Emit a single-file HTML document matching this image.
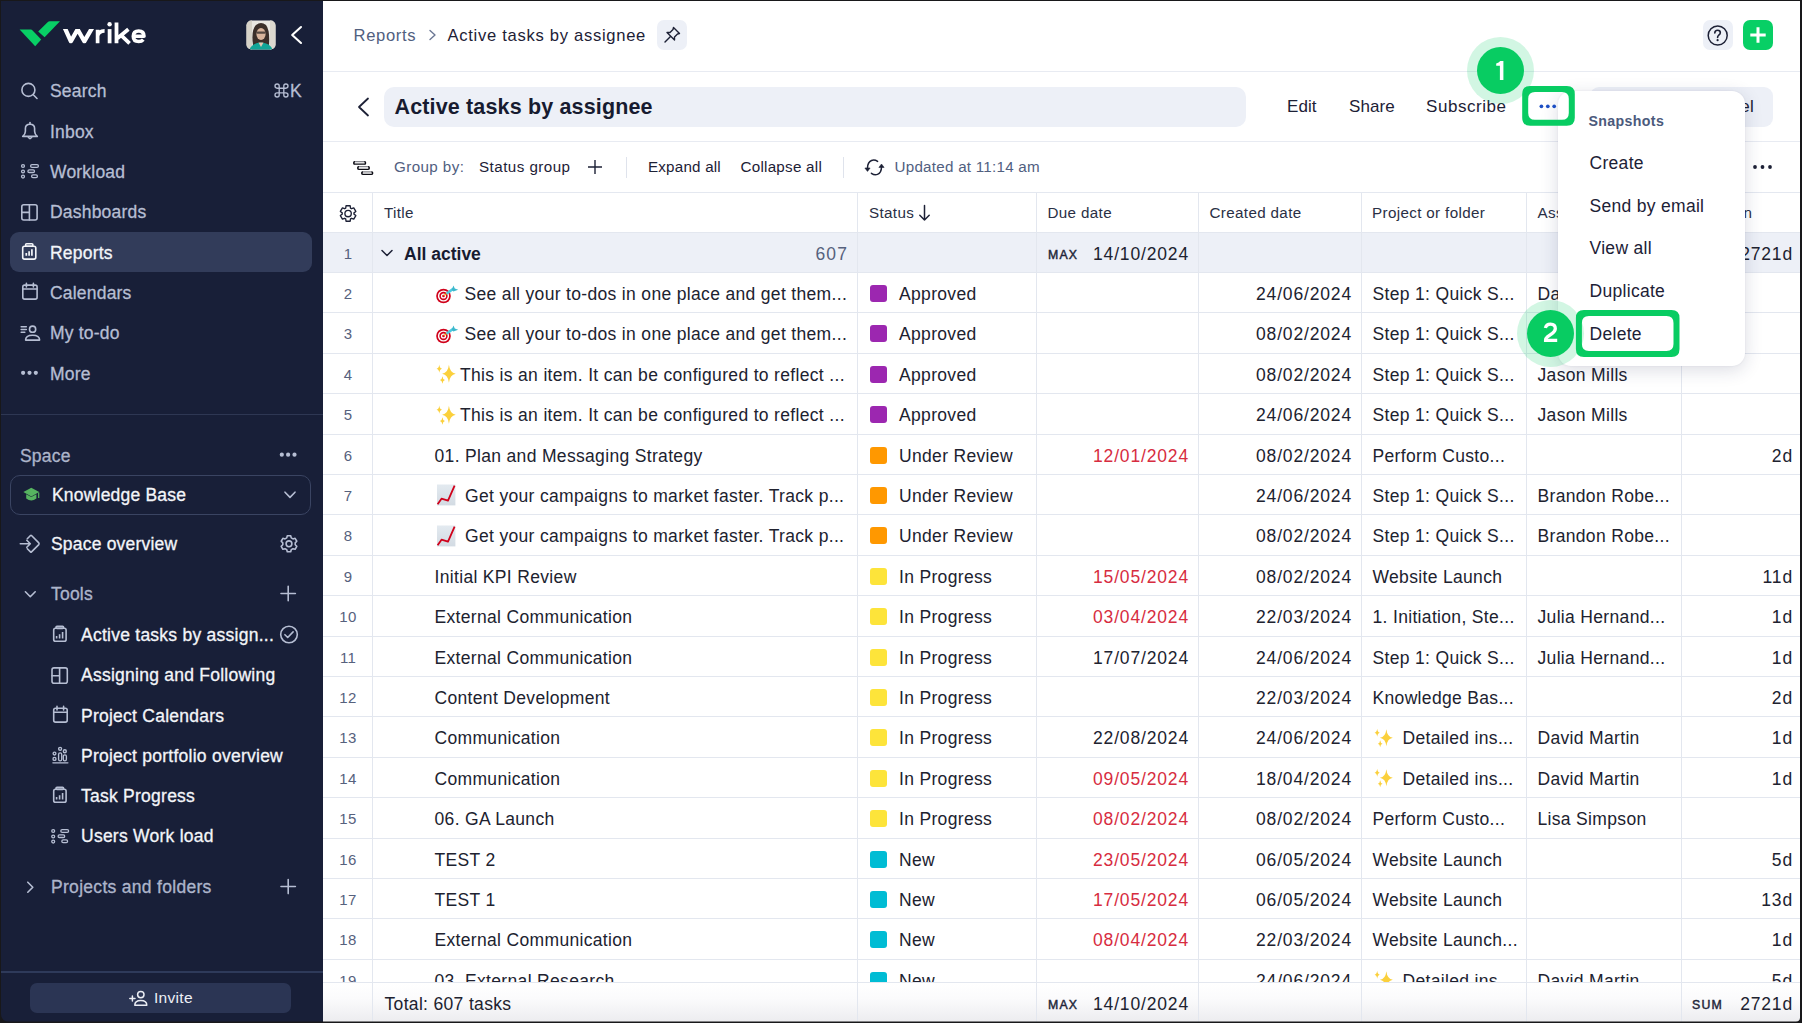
<!DOCTYPE html><html><head><meta charset="utf-8"><style>
*{box-sizing:border-box;margin:0;padding:0}
html,body{width:1802px;height:1023px;overflow:hidden;background:#1b1b1d;font-family:"Liberation Sans", sans-serif}
#frame{position:absolute;left:0;top:0;width:1802px;height:1023px;background:#fff;overflow:hidden}
.abs{position:absolute}
.t{position:absolute;white-space:nowrap;line-height:20px;height:20px}
#sb{position:absolute;left:0;top:0;width:323px;height:1023px;background:#181f38}
.nav{font-size:17.5px;letter-spacing:0.2px;color:#b6bed3;-webkit-text-stroke:0.3px #b6bed3}
.wh{color:#f3f5f9;-webkit-text-stroke:0.3px #f3f5f9}
.ic{position:absolute;overflow:visible}
#main{position:absolute;left:323px;top:0;width:1477px;height:1023px;background:#fff}
.hl{position:absolute;left:0;width:1477px;height:1px;background:#e4e8f0}
.row{position:absolute;left:0;width:1477px;height:40.39px;border-bottom:1px solid #e3e7ef}
.c{position:absolute;top:0;height:100%;border-right:1px solid #e3e7ef}
.tx{position:absolute;white-space:nowrap;font-size:17.5px;letter-spacing:0.33px;color:#20222f;line-height:20px;top:11px}
.dt{letter-spacing:0.84px}
.red{color:#d72c40}
.num{position:absolute;left:0;width:50px;text-align:center;font-size:15px;letter-spacing:0.3px;color:#56617d;line-height:20px;top:11px}
.sq{position:absolute;left:12px;top:12px;width:17px;height:17px;border-radius:3px}
</style></head><body><div id="frame">
<div id="sb">
<div class="abs" style="left:10px;top:232px;width:302px;height:40px;border-radius:9px;background:#323c5a"></div>
<div class="abs" style="left:30px;top:983px;width:261px;height:30px;border-radius:7px;background:#2b3554"></div>
<svg class="ic" style="left:0;top:0" width="323" height="1023" viewBox="0 0 323 1023"><path d="M19.6 29.6 L30.8 29.6 Q31.8 29.6 32.6 30.4 L41.2 39.6 L35.2 46.3 Z" fill="#08cf65"/><path d="M38.2 31.4 L47.6 22.3 Q48.6 21.3 49.8 21.3 L60 21.3 L44.6 37.2 Z" fill="#08cf65"/><g fill="none" stroke="#fff" stroke-width="3.8" stroke-linejoin="round"><clipPath id="wc"><rect x="60" y="29.1" width="40" height="14.3"/></clipPath><path clip-path="url(#wc)" d="M64.6 27.5 L70.9 41.3 L77.6 29.5 L84.3 41.3 L92.4 27.5" stroke-width="4.3" stroke-linejoin="round"/><path d="M97.6 43.3 V29.8 M97.6 36 Q98.6 30.9 104.6 30.9" stroke-width="3.7"/><path d="M109.6 29.1 V43.3" stroke-width="3.8"/><path d="M116.5 22.4 V43.3 M117.5 38.2 L128.4 29.3 M121.2 35.4 L129.6 43.3" stroke-width="3.8"/><path d="M133.4 36.3 H144 Q144 31 138.7 31 Q133.3 31 133.3 36.3 Q133.3 41.5 138.7 41.5 Q141.6 41.5 143.3 39.6" stroke-width="3.6"/></g><circle cx="109.6" cy="24.3" r="2.2" fill="#fff"/><defs><clipPath id="av"><rect x="246.5" y="20.5" width="29" height="29" rx="5"/></clipPath></defs><g clip-path="url(#av)"><rect x="246" y="20" width="30" height="30" fill="#e9e7e2"/><rect x="246" y="20" width="6" height="30" fill="#d6d2c8"/><rect x="270" y="20" width="6" height="30" fill="#dcd8cf"/><path d="M253 45 Q251 30 256 25 Q261 21 266 25 Q270 30 269 45 Z" fill="#3b2f2a"/><ellipse cx="261" cy="34" rx="4.6" ry="6" fill="#d9b49c"/><rect x="256.5" y="31.5" width="9" height="2.2" rx="1" fill="#2b2624" opacity="0.75"/><path d="M249 51 Q251 43 261 42.5 Q271 43 273 51 Z" fill="#12a597"/><path d="M258.5 42.5 L261 47 L263.5 42.5 Z" fill="#e6c6b0"/></g><path d="M301 27 L292.2 35 L301 43" stroke="#fff" stroke-width="2.1" fill="none" stroke-linecap="round" stroke-linejoin="round"/><circle cx="23.1" cy="372.8" r="2.1" fill="#b6bed3"/><circle cx="29.5" cy="372.8" r="2.1" fill="#b6bed3"/><circle cx="35.8" cy="372.8" r="2.1" fill="#b6bed3"/><circle cx="281.8" cy="454.7" r="2.1" fill="#b6bed3"/><circle cx="288.1" cy="454.7" r="2.1" fill="#b6bed3"/><circle cx="294.5" cy="454.7" r="2.1" fill="#b6bed3"/><path d="M23.4 492 L31.3 487.8 L39.2 492 L31.3 496.4 Z" fill="#56b460"/><path d="M26.2 494.2 L26.2 498.6 Q31.3 502.6 36.4 498.6 L36.4 494.2 L31.3 497.1 Z" fill="#56b460"/><rect x="38.1" y="492.5" width="1.2" height="5.5" fill="#56b460"/><g fill="none" stroke="#e9ecf3" stroke-width="1.5" stroke-linecap="round" stroke-linejoin="round"><path d="M129.8 998.5 H135 M132.4 995.9 V1001.1"/><circle cx="140.8" cy="994.6" r="3.2"/><path d="M134.8 1005.3 Q134.8 1000.5 140.8 1000.5 Q146.8 1000.5 146.8 1005.3 Z"/></g><g fill="none" stroke="#b6bed3" stroke-width="1.6" stroke-linecap="round" stroke-linejoin="round"><circle cx="28.4" cy="89.9" r="6.5"/><path d="M33.3 94.8 L37 98.5"/><path d="M22.7 136.4 Q25.4 134.3 25.4 131.3 V128.6 Q25.4 124.3 30 124.3 Q34.6 124.3 34.6 128.6 V131.3 Q34.6 134.3 37.3 136.4 Z"/><path d="M30 122.5 V124.3"/><path d="M28.3 137.2 Q30 140 31.7 137.2"/><g stroke-width="1.3"><circle cx="23" cy="166" r="1.45"/><circle cx="23" cy="171.5" r="1.45"/><circle cx="23" cy="176.6" r="1.45"/><rect x="30.6" y="164.7" width="7.8" height="2.7" rx="1.35"/><rect x="27.9" y="169.8" width="6.6" height="2.7" rx="1.35"/><rect x="31.6" y="174.9" width="5.8" height="2.7" rx="1.35"/></g><rect x="21.8" y="204.7" width="15.3" height="15.3" rx="2"/><path d="M29.4 204.7 V220 M21.8 212.4 H29.4"/><g stroke="#f3f5f9"><rect x="22.7" y="246.2" width="13.1" height="12.9" rx="1.8"/><rect x="25.6" y="243.8" width="7.3" height="2.4" rx="1"/><path stroke-width="1.7" stroke-linecap="butt" d="M26.3 253 V255.8 M29.1 251.3 V255.8 M31.9 249.3 V255.8"/></g><rect x="22.8" y="285.1" width="14.3" height="14" rx="1.8"/><path d="M22.8 289 H37.1 M26.4 283.3 V287 M33.4 283.3 V287"/><path d="M21.2 326.7 H26.3 M21.2 329.5 H26.3 M21.2 332.2 H24.8"/><circle cx="32.6" cy="329.2" r="3.1"/><path d="M25.6 340.1 Q25.6 335.2 32.6 335.2 Q39.6 335.2 39.6 340.1 Z"/><path d="M285 492.2 L290 497.4 L295 492.2"/><path d="M20.3 543.8 H30.3 M26.8 540.3 L30.3 543.8 L26.8 547.3"/><path d="M27.3 538.7 L30.5 535.5 Q31 535 31.5 535.5 L38.8 542.9 Q39.4 543.8 38.8 544.6 L31.5 551.9 Q31 552.4 30.5 551.9 L27.3 548.7"/><path d="M286.74 537.92 L287.30 535.78 L290.70 535.78 L291.26 537.92 L292.96 538.90 L295.09 538.31 L296.80 541.27 L295.22 542.81 L295.22 544.79 L296.80 546.33 L295.09 549.29 L292.96 548.70 L291.26 549.68 L290.70 551.82 L287.30 551.82 L286.74 549.68 L285.04 548.70 L282.91 549.29 L281.20 546.33 L282.78 544.79 L282.78 542.81 L281.20 541.27 L282.91 538.31 L285.04 538.90 Z"/><circle cx="289" cy="543.8" r="2.9"/><path d="M25.4 591.8 L30.3 596.7 L35.2 591.8"/><path d="M288.2 586.3 V600.7 M281 593.5 H295.4"/><rect x="53.7" y="628.3" width="12.4" height="13" rx="1.8"/><rect x="56" y="626.2" width="7.6" height="2.2" rx="1"/><path stroke-width="1.6" stroke-linecap="butt" d="M56.6 636 V638.5 M59.6 634.3 V638.5 M62.6 632 V638.5"/><rect x="53.7" y="789.3" width="12.4" height="13" rx="1.8"/><rect x="56" y="787.2" width="7.6" height="2.2" rx="1"/><path stroke-width="1.6" stroke-linecap="butt" d="M56.6 797 V799.5 M59.6 795.3 V799.5 M62.6 793 V799.5"/><rect x="52" y="667.9" width="15.3" height="15.3" rx="2"/><path d="M59.6 667.9 V683.2 M52 675.8 H59.6"/><rect x="53.7" y="708.2" width="13.5" height="13.9" rx="1.8"/><path d="M53.7 712.3 H67.2 M57 706.4 V710 M63.6 706.4 V710"/><g stroke-width="1.35"><circle cx="54.5" cy="753.6" r="1.4"/><circle cx="54.5" cy="758.9" r="1.5"/><rect x="58.6" y="752.8" width="3.1" height="8.1" rx="1.55"/><circle cx="60.1" cy="748.8" r="1.5"/><rect x="63.3" y="754.8" width="3.1" height="6.1" rx="1.55"/><circle cx="64.8" cy="751.2" r="1.5"/><path d="M52.9 762.8 H67.9"/></g><g stroke-width="1.3"><circle cx="53.2" cy="831" r="1.45"/><circle cx="53.2" cy="836.5" r="1.45"/><circle cx="53.2" cy="841.6" r="1.45"/><rect x="60.8" y="829.7" width="7.8" height="2.7" rx="1.35"/><rect x="58.099999999999994" y="834.8" width="6.6" height="2.7" rx="1.35"/><rect x="61.8" y="839.9" width="5.8" height="2.7" rx="1.35"/></g><circle cx="289" cy="634.5" r="8.3"/><path d="M284.9 634.7 L287.7 637.5 L293.1 631.9"/><path d="M27.8 882.2 L32.8 887.2 L27.8 892.2"/><path d="M288.2 879.5 V893.6 M281 886.5 H295.4"/></g></svg>
<div class="t nav" style="left:50px;top:81.0px">Search</div>
<div class="t nav" style="left:50px;top:121.5px">Inbox</div>
<div class="t nav" style="left:50px;top:161.8px">Workload</div>
<div class="t nav" style="left:50px;top:202.1px">Dashboards</div>
<div class="t nav wh" style="left:50px;top:242.5px">Reports</div>
<div class="t nav" style="left:50px;top:282.8px">Calendars</div>
<div class="t nav" style="left:50px;top:323.2px">My to-do</div>
<div class="t nav" style="left:50px;top:363.5px">More</div>
<div class="t nav" style="left:290px;top:80.5px;font-size:17.5px;letter-spacing:0">K</div>
<svg class="ic" style="left:270px;top:80px" width="22" height="22" viewBox="270 80 22 22"><path d="M279.2 88.2 H283.8 V92.8 H279.2 Z M279.2 88.2 V86.1 A2.1 2.1 0 1 0 277.1 88.2 Z M283.8 88.2 V86.1 A2.1 2.1 0 1 1 285.9 88.2 Z M279.2 92.8 V94.9 A2.1 2.1 0 1 1 277.1 92.8 Z M283.8 92.8 V94.9 A2.1 2.1 0 1 0 285.9 92.8 Z" fill="none" stroke="#b6bed3" stroke-width="1.35" stroke-linejoin="round"/></svg>
<div class="abs" style="left:0;top:414px;width:323px;height:1.2px;background:#2e3753"></div>
<div class="t nav" style="left:20px;top:446px;color:#a9b1c7">Space</div>
<div class="abs" style="left:10px;top:474.5px;width:301px;height:40px;border-radius:10px;border:1.2px solid #3a4462"></div>
<div class="t nav wh" style="left:52px;top:485px">Knowledge Base</div>
<div class="t nav wh" style="left:51px;top:533.5px">Space overview</div>
<div class="t nav" style="left:51px;top:584px;color:#aab2c8">Tools</div>
<div class="t nav wh" style="left:81px;top:625.2px;letter-spacing:0.25px">Active tasks by assign...</div>
<div class="t nav wh" style="left:81px;top:665.3px;letter-spacing:0.25px">Assigning and Following</div>
<div class="t nav wh" style="left:81px;top:706px;letter-spacing:0.25px">Project Calendars</div>
<div class="t nav wh" style="left:81px;top:746px;letter-spacing:0.25px">Project portfolio overview</div>
<div class="t nav wh" style="left:81px;top:785.8px;letter-spacing:0.25px">Task Progress</div>
<div class="t nav wh" style="left:81px;top:826.1px;letter-spacing:0.25px">Users Work load</div>
<div class="t nav" style="left:51px;top:877.3px;color:#aab2c8;letter-spacing:0.3px">Projects and folders</div>
<div class="abs" style="left:0;top:971px;width:323px;height:1.5px;background:#2e3a5a"></div>
<div class="t" style="left:154px;top:988px;font-size:15.5px;letter-spacing:0.3px;color:#eef0f6">Invite</div>
</div>
<div id="main">
<div class="t" style="left:30.5px;top:26px;font-size:16.6px;letter-spacing:0.65px;color:#51607f">Reports</div>
<svg class="ic" style="left:104px;top:27px" width="12" height="16" viewBox="0 0 12 16"><path d="M3 3.5 L8 8 L3 12.5" stroke="#6b7794" stroke-width="1.4" fill="none" stroke-linecap="round" stroke-linejoin="round"/></svg>
<div class="t" style="left:124.5px;top:26px;font-size:16.6px;letter-spacing:0.7px;color:#1d2136">Active tasks by assignee</div>
<div class="abs" style="left:334px;top:20px;width:30px;height:30px;border-radius:7px;background:#edf0f7"></div>
<svg class="ic" style="left:339px;top:25px" width="20" height="20" viewBox="0 0 20 20" fill="none" stroke="#1d2136" stroke-width="1.4" stroke-linejoin="round" stroke-linecap="round"><path d="M11.5 2.5 L17.5 8.5 L15.5 9 L12.5 12 L12.5 15 L5 7.5 L8 7.5 L11 4.5 Z"/><path d="M8.5 11.5 L3 17"/></svg>
<div class="abs" style="left:1380px;top:20px;width:30px;height:30px;border-radius:7px;background:#edf0f7"></div>
<svg class="ic" style="left:1384px;top:24.5px" width="21" height="21" viewBox="0 0 21 21"><circle cx="10.7" cy="10.5" r="9.5" stroke="#1d2136" stroke-width="1.5" fill="none"/><path d="M7.8 8 Q7.8 5.3 10.6 5.3 Q13.3 5.3 13.3 7.8 Q13.3 9.3 11.6 10.3 Q10.6 11 10.6 12.5" stroke="#1d2136" stroke-width="1.6" fill="none" stroke-linecap="round"/><circle cx="10.6" cy="15.2" r="1.1" fill="#1d2136"/></svg>
<div class="abs" style="left:1420px;top:20px;width:30px;height:30px;border-radius:7px;background:#08cf65"></div>
<svg class="ic" style="left:1420px;top:20px" width="30" height="30" viewBox="0 0 30 30"><path d="M15 7.3 L15 22.7 M7.3 15 L22.7 15" stroke="#fff" stroke-width="3"/></svg>
<div class="hl" style="top:70.5px;height:1.5px;background:#e8ebf2"></div>
<svg class="ic" style="left:29px;top:96px" width="22" height="22" viewBox="0 0 22 22"><path d="M16 2.5 L7 11 L16 19.5" stroke="#1d2136" stroke-width="1.8" fill="none" stroke-linecap="round" stroke-linejoin="round"/></svg>
<div class="abs" style="left:60.5px;top:86.5px;width:862.5px;height:40px;border-radius:10px;background:#edf0f7"></div>
<div class="t" style="left:71.5px;top:91.5px;height:30px;line-height:30px;font-size:21.5px;font-weight:bold;letter-spacing:0.15px;color:#171b30">Active tasks by assignee</div>
<div class="t" style="left:964px;top:96.5px;font-size:17px;letter-spacing:0.05px;color:#1d2136">Edit</div>
<div class="t" style="left:1026px;top:96.5px;font-size:17px;letter-spacing:0.1px;color:#1d2136">Share</div>
<div class="t" style="left:1103px;top:96.5px;font-size:17px;letter-spacing:0.55px;color:#1d2136">Subscribe</div>
<div class="abs" style="left:1266.5px;top:86.5px;width:183px;height:40px;border-radius:9px;background:#edf0f7"></div>
<div class="t" style="left:1338px;top:96.5px;font-size:17px;letter-spacing:0.3px;color:#1d2136">Close panel</div>
<div class="hl" style="top:140.5px;height:1.5px;background:#e8ebf2"></div>
<svg class="ic" style="left:23px;top:152px" width="36" height="30" viewBox="346 152 36 30" fill="none" stroke-width="1.3"><g stroke="#85858c"><path d="M355 164.2 A1.3 1.3 0 0 1 355 161.6 H364.3 A1.3 1.3 0 0 1 364.3 164.2"/><path d="M359 169.3 A1.3 1.3 0 0 1 359 166.7 H368 A1.3 1.3 0 0 1 368 169.3"/><path d="M363 174.4 A1.3 1.3 0 0 1 363 171.8 H371.4 A1.3 1.3 0 0 1 371.4 174.4"/></g><g stroke="#0c0c14"><path d="M355 161.6 A1.3 1.3 0 0 0 355 164.2 H364.3 A1.3 1.3 0 0 0 364.3 161.6"/><path d="M359 166.7 A1.3 1.3 0 0 0 359 169.3 H368 A1.3 1.3 0 0 0 368 166.7"/><path d="M363 171.8 A1.3 1.3 0 0 0 363 174.4 H371.4 A1.3 1.3 0 0 0 371.4 171.8"/></g></svg>
<div class="t" style="left:71px;top:157px;font-size:15.2px;letter-spacing:0.4px;color:#51607f">Group by:</div>
<div class="t" style="left:156px;top:157px;font-size:15.2px;letter-spacing:0.45px;color:#1d2136">Status group</div>
<svg class="ic" style="left:263px;top:158px" width="18" height="18" viewBox="0 0 18 18"><path d="M9 2 L9 16 M2 9 L16 9" stroke="#1d2136" stroke-width="1.4"/></svg>
<div class="abs" style="left:303px;top:157px;width:1px;height:21px;background:#dfe3ec"></div>
<div class="t" style="left:325px;top:157px;font-size:15.2px;letter-spacing:0.2px;color:#1d2136">Expand all</div>
<div class="t" style="left:417.5px;top:157px;font-size:15.2px;letter-spacing:0.25px;color:#1d2136">Collapse all</div>
<div class="abs" style="left:520px;top:157px;width:1px;height:21px;background:#dfe3ec"></div>
<svg class="ic" style="left:535px;top:152px" width="34" height="30" viewBox="858 152 34 30"><g fill="none" stroke="#1d2136" stroke-width="1.5" stroke-linecap="round"><path d="M877.6 161.4 Q874.5 159.3 871.5 160.5 Q867.6 162.1 867.5 168"/><path d="M871.4 173.3 Q874.5 175.5 877.5 174.4 Q881.4 172.9 881.5 167"/></g><path d="M864.9 168 L870.1 168 L867.5 171.4 Z M878.9 167.4 L884.1 167.4 L881.5 164 Z" fill="#1d2136" stroke="#1d2136" stroke-width="0.6" stroke-linejoin="round"/></svg>
<div class="t" style="left:571.5px;top:157px;font-size:15.2px;letter-spacing:0.25px;color:#51607f">Updated at 11:14 am</div>
<svg class="ic" style="left:1429px;top:160px" width="22" height="14" viewBox="0 0 22 14"><circle cx="3" cy="7" r="1.9" fill="#1d2136"/><circle cx="10.5" cy="7" r="1.9" fill="#1d2136"/><circle cx="18" cy="7" r="1.9" fill="#1d2136"/></svg>
<div class="hl" style="top:192px;height:1.2px;background:#e4e8f0"></div>
<div class="row" style="top:192.5px;height:40px"><div class="c" style="left:0px;width:50px"></div><div class="c" style="left:50px;width:485px"></div><div class="c" style="left:535px;width:179px"></div><div class="c" style="left:714px;width:162px"></div><div class="c" style="left:876px;width:163px"></div><div class="c" style="left:1039px;width:165px"></div><div class="c" style="left:1204px;width:155px"></div><div class="c" style="left:1359px;width:118px;border-right:none"></div>
<svg class="ic" style="left:0;top:0" width="50" height="40" viewBox="0 0 50 40"><path d="M22.70 15.11 L23.03 12.77 L27.17 12.77 L27.50 15.11 L28.57 15.73 L30.76 14.84 L32.83 18.43 L30.97 19.88 L30.97 21.12 L32.83 22.57 L30.76 26.16 L28.57 25.27 L27.50 25.89 L27.17 28.23 L23.03 28.23 L22.70 25.89 L21.63 25.27 L19.44 26.16 L17.37 22.57 L19.23 21.12 L19.23 19.88 L17.37 18.43 L19.44 14.84 L21.63 15.73 Z" fill="none" stroke="#1d2136" stroke-width="1.35" stroke-linejoin="round"/><circle cx="25.1" cy="20.5" r="3.2" fill="none" stroke="#1d2136" stroke-width="1.35"/></svg>
<div class="t" style="left:61px;top:10.5px;font-size:15.2px;letter-spacing:0.35px;color:#2a2f45">Title</div>
<div class="t" style="left:546px;top:10.5px;font-size:15.2px;letter-spacing:0.35px;color:#2a2f45">Status</div>
<div class="t" style="left:724.5px;top:10.5px;font-size:15.2px;letter-spacing:0.35px;color:#2a2f45">Due date</div>
<div class="t" style="left:886.5px;top:10.5px;font-size:15.2px;letter-spacing:0.35px;color:#2a2f45">Created date</div>
<div class="t" style="left:1049px;top:10.5px;font-size:15.2px;letter-spacing:0.35px;color:#2a2f45">Project or folder</div>
<div class="t" style="left:1214.5px;top:10.5px;font-size:15.2px;letter-spacing:0.35px;color:#2a2f45">Assignee</div>
<div class="t" style="left:1369px;top:10.5px;font-size:15.2px;letter-spacing:0.35px;color:#2a2f45">Duration</div>
<svg class="ic" style="left:595px;top:11px" width="13" height="18" viewBox="0 0 13 18" fill="none" stroke="#1d2136" stroke-width="1.5" stroke-linecap="round" stroke-linejoin="round"><path d="M6.5 1.5 L6.5 16 M1.8 11.3 L6.5 16 L11.2 11.3"/></svg>
</div>
<div class="row" style="top:232.7px;background:#edf0f7"><div class="c" style="left:0px;width:50px"></div><div class="c" style="left:50px;width:485px"></div><div class="c" style="left:535px;width:179px"></div><div class="c" style="left:714px;width:162px"></div><div class="c" style="left:876px;width:163px"></div><div class="c" style="left:1039px;width:165px"></div><div class="c" style="left:1204px;width:155px"></div><div class="c" style="left:1359px;width:118px;border-right:none"></div>
<div class="num">1</div>
<svg class="ic" style="left:57px;top:14px" width="14" height="12" viewBox="0 0 14 12"><path d="M2 3.5 L7 8.5 L12 3.5" stroke="#1d2136" stroke-width="1.5" fill="none" stroke-linecap="round" stroke-linejoin="round"/></svg>
<div class="tx" style="left:81px;font-weight:bold;letter-spacing:0;color:#171b30">All active</div>
<div class="tx dt" style="right:952px;color:#56617d;letter-spacing:1.1px">607</div>
<div class="tx" style="left:725px;top:12.5px;font-size:12.3px;letter-spacing:1.2px;color:#23273a;-webkit-text-stroke:0.45px #23273a">MAX</div>
<div class="tx dt" style="right:611px">14/10/2024</div>
<div class="tx dt" style="right:7px">2721d</div>
</div>
<div class="row" style="top:273.09px"><div class="c" style="left:0px;width:50px"></div><div class="c" style="left:50px;width:485px"></div><div class="c" style="left:535px;width:179px"></div><div class="c" style="left:714px;width:162px"></div><div class="c" style="left:876px;width:163px"></div><div class="c" style="left:1039px;width:165px"></div><div class="c" style="left:1204px;width:155px"></div><div class="c" style="left:1359px;width:118px;border-right:none"></div>
<div class="num">2</div>
<svg class="ic" style="left:111.5px;top:10px" width="24" height="20" viewBox="0 0 24 20"><circle cx="8.5" cy="13" r="7.3" fill="#d0021b"/><circle cx="8.5" cy="13" r="5.6" fill="#fff"/><circle cx="8.5" cy="13" r="4.2" fill="#d0021b"/><circle cx="8.5" cy="13" r="2.6" fill="#fff"/><circle cx="8.5" cy="13" r="1.3" fill="#d0021b"/><path d="M8.8 12.8 L14 8.8" stroke="#f5a623" stroke-width="1.3"/><path d="M12.5 10 L17.6 6.2" stroke="#4cc9e0" stroke-width="2.6" stroke-linecap="round"/><path d="M16.8 7 L18.4 2.6 L19.8 5.4 L23.2 6.7 L18.4 8.4 Z" fill="#3cb8cc"/></svg>
<div class="tx" style="left:141.5px">See all your to-dos in one place and get them...</div>
<div class="sq" style="left:547px;background:#9c27b0"></div>
<div class="tx" style="left:576px">Approved</div>
<div class="tx dt" style="right:448px">24/06/2024</div>
<div class="tx" style="left:1049.5px">Step 1: Quick S...</div>
<div class="tx" style="left:1214.5px">David Martin</div>
</div>
<div class="row" style="top:313.48px"><div class="c" style="left:0px;width:50px"></div><div class="c" style="left:50px;width:485px"></div><div class="c" style="left:535px;width:179px"></div><div class="c" style="left:714px;width:162px"></div><div class="c" style="left:876px;width:163px"></div><div class="c" style="left:1039px;width:165px"></div><div class="c" style="left:1204px;width:155px"></div><div class="c" style="left:1359px;width:118px;border-right:none"></div>
<div class="num">3</div>
<svg class="ic" style="left:111.5px;top:10px" width="24" height="20" viewBox="0 0 24 20"><circle cx="8.5" cy="13" r="7.3" fill="#d0021b"/><circle cx="8.5" cy="13" r="5.6" fill="#fff"/><circle cx="8.5" cy="13" r="4.2" fill="#d0021b"/><circle cx="8.5" cy="13" r="2.6" fill="#fff"/><circle cx="8.5" cy="13" r="1.3" fill="#d0021b"/><path d="M8.8 12.8 L14 8.8" stroke="#f5a623" stroke-width="1.3"/><path d="M12.5 10 L17.6 6.2" stroke="#4cc9e0" stroke-width="2.6" stroke-linecap="round"/><path d="M16.8 7 L18.4 2.6 L19.8 5.4 L23.2 6.7 L18.4 8.4 Z" fill="#3cb8cc"/></svg>
<div class="tx" style="left:141.5px">See all your to-dos in one place and get them...</div>
<div class="sq" style="left:547px;background:#9c27b0"></div>
<div class="tx" style="left:576px">Approved</div>
<div class="tx dt" style="right:448px">08/02/2024</div>
<div class="tx" style="left:1049.5px">Step 1: Quick S...</div>
<div class="tx" style="left:1214.5px">David Martin</div>
</div>
<div class="row" style="top:353.87px"><div class="c" style="left:0px;width:50px"></div><div class="c" style="left:50px;width:485px"></div><div class="c" style="left:535px;width:179px"></div><div class="c" style="left:714px;width:162px"></div><div class="c" style="left:876px;width:163px"></div><div class="c" style="left:1039px;width:165px"></div><div class="c" style="left:1204px;width:155px"></div><div class="c" style="left:1359px;width:118px;border-right:none"></div>
<div class="num">4</div>
<svg class="ic" style="left:114px;top:9.5px" width="21" height="21" viewBox="0 0 22 22"><g fill="#fbd03c"><path d="M12.5 1.8 Q13.4 10.2 19.6 11.2 Q13.4 12.2 12.5 20.6 Q11.6 12.2 5.4 11.2 Q11.6 10.2 12.5 1.8 Z"/><path d="M2.4 1.5 Q2.8 5.4 5.3 5.9 Q2.8 6.4 2.4 10.3 Q2 6.4 -0.5 5.9 Q2 5.4 2.4 1.5 Z"/><path d="M5.7 13.9 Q6.05 17.3 8.3 17.8 Q6.05 18.3 5.7 21.7 Q5.35 18.3 3.1 17.8 Q5.35 17.3 5.7 13.9 Z"/></g></svg>
<div class="tx" style="left:137px">This is an item. It can be configured to reflect ...</div>
<div class="sq" style="left:547px;background:#9c27b0"></div>
<div class="tx" style="left:576px">Approved</div>
<div class="tx dt" style="right:448px">08/02/2024</div>
<div class="tx" style="left:1049.5px">Step 1: Quick S...</div>
<div class="tx" style="left:1214.5px">Jason Mills</div>
</div>
<div class="row" style="top:394.26px"><div class="c" style="left:0px;width:50px"></div><div class="c" style="left:50px;width:485px"></div><div class="c" style="left:535px;width:179px"></div><div class="c" style="left:714px;width:162px"></div><div class="c" style="left:876px;width:163px"></div><div class="c" style="left:1039px;width:165px"></div><div class="c" style="left:1204px;width:155px"></div><div class="c" style="left:1359px;width:118px;border-right:none"></div>
<div class="num">5</div>
<svg class="ic" style="left:114px;top:9.5px" width="21" height="21" viewBox="0 0 22 22"><g fill="#fbd03c"><path d="M12.5 1.8 Q13.4 10.2 19.6 11.2 Q13.4 12.2 12.5 20.6 Q11.6 12.2 5.4 11.2 Q11.6 10.2 12.5 1.8 Z"/><path d="M2.4 1.5 Q2.8 5.4 5.3 5.9 Q2.8 6.4 2.4 10.3 Q2 6.4 -0.5 5.9 Q2 5.4 2.4 1.5 Z"/><path d="M5.7 13.9 Q6.05 17.3 8.3 17.8 Q6.05 18.3 5.7 21.7 Q5.35 18.3 3.1 17.8 Q5.35 17.3 5.7 13.9 Z"/></g></svg>
<div class="tx" style="left:137px">This is an item. It can be configured to reflect ...</div>
<div class="sq" style="left:547px;background:#9c27b0"></div>
<div class="tx" style="left:576px">Approved</div>
<div class="tx dt" style="right:448px">24/06/2024</div>
<div class="tx" style="left:1049.5px">Step 1: Quick S...</div>
<div class="tx" style="left:1214.5px">Jason Mills</div>
</div>
<div class="row" style="top:434.65px"><div class="c" style="left:0px;width:50px"></div><div class="c" style="left:50px;width:485px"></div><div class="c" style="left:535px;width:179px"></div><div class="c" style="left:714px;width:162px"></div><div class="c" style="left:876px;width:163px"></div><div class="c" style="left:1039px;width:165px"></div><div class="c" style="left:1204px;width:155px"></div><div class="c" style="left:1359px;width:118px;border-right:none"></div>
<div class="num">6</div>
<div class="tx" style="left:111.5px">01. Plan and Messaging Strategy</div>
<div class="sq" style="left:547px;background:#ff9800"></div>
<div class="tx" style="left:576px">Under Review</div>
<div class="tx dt red" style="right:611px">12/01/2024</div>
<div class="tx dt" style="right:448px">08/02/2024</div>
<div class="tx" style="left:1049.5px">Perform Custo...</div>
<div class="tx dt" style="right:7px">2d</div>
</div>
<div class="row" style="top:475.04px"><div class="c" style="left:0px;width:50px"></div><div class="c" style="left:50px;width:485px"></div><div class="c" style="left:535px;width:179px"></div><div class="c" style="left:714px;width:162px"></div><div class="c" style="left:876px;width:163px"></div><div class="c" style="left:1039px;width:165px"></div><div class="c" style="left:1204px;width:155px"></div><div class="c" style="left:1359px;width:118px;border-right:none"></div>
<div class="num">7</div>
<svg class="ic" style="left:113px;top:8.3px" width="20" height="24" viewBox="0 0 20 24"><defs><linearGradient id="cg" x1="0" y1="0" x2="0" y2="1"><stop offset="0" stop-color="#e3eaf0"/><stop offset="1" stop-color="#d3dbe3"/></linearGradient></defs><rect x="1" y="1.5" width="18.4" height="20.9" fill="url(#cg)"/><path d="M1.6 21.2 L5.5 15.7 L12 17.7 L18.6 2.6" stroke="#d0021b" stroke-width="1.8" fill="none" stroke-linejoin="round"/></svg>
<div class="tx" style="left:142px">Get your campaigns to market faster. Track p...</div>
<div class="sq" style="left:547px;background:#ff9800"></div>
<div class="tx" style="left:576px">Under Review</div>
<div class="tx dt" style="right:448px">24/06/2024</div>
<div class="tx" style="left:1049.5px">Step 1: Quick S...</div>
<div class="tx" style="left:1214.5px">Brandon Robe...</div>
</div>
<div class="row" style="top:515.43px"><div class="c" style="left:0px;width:50px"></div><div class="c" style="left:50px;width:485px"></div><div class="c" style="left:535px;width:179px"></div><div class="c" style="left:714px;width:162px"></div><div class="c" style="left:876px;width:163px"></div><div class="c" style="left:1039px;width:165px"></div><div class="c" style="left:1204px;width:155px"></div><div class="c" style="left:1359px;width:118px;border-right:none"></div>
<div class="num">8</div>
<svg class="ic" style="left:113px;top:8.3px" width="20" height="24" viewBox="0 0 20 24"><defs><linearGradient id="cg" x1="0" y1="0" x2="0" y2="1"><stop offset="0" stop-color="#e3eaf0"/><stop offset="1" stop-color="#d3dbe3"/></linearGradient></defs><rect x="1" y="1.5" width="18.4" height="20.9" fill="url(#cg)"/><path d="M1.6 21.2 L5.5 15.7 L12 17.7 L18.6 2.6" stroke="#d0021b" stroke-width="1.8" fill="none" stroke-linejoin="round"/></svg>
<div class="tx" style="left:142px">Get your campaigns to market faster. Track p...</div>
<div class="sq" style="left:547px;background:#ff9800"></div>
<div class="tx" style="left:576px">Under Review</div>
<div class="tx dt" style="right:448px">08/02/2024</div>
<div class="tx" style="left:1049.5px">Step 1: Quick S...</div>
<div class="tx" style="left:1214.5px">Brandon Robe...</div>
</div>
<div class="row" style="top:555.82px"><div class="c" style="left:0px;width:50px"></div><div class="c" style="left:50px;width:485px"></div><div class="c" style="left:535px;width:179px"></div><div class="c" style="left:714px;width:162px"></div><div class="c" style="left:876px;width:163px"></div><div class="c" style="left:1039px;width:165px"></div><div class="c" style="left:1204px;width:155px"></div><div class="c" style="left:1359px;width:118px;border-right:none"></div>
<div class="num">9</div>
<div class="tx" style="left:111.5px">Initial KPI Review</div>
<div class="sq" style="left:547px;background:#fde43a"></div>
<div class="tx" style="left:576px">In Progress</div>
<div class="tx dt red" style="right:611px">15/05/2024</div>
<div class="tx dt" style="right:448px">08/02/2024</div>
<div class="tx" style="left:1049.5px">Website Launch</div>
<div class="tx dt" style="right:7px">11d</div>
</div>
<div class="row" style="top:596.21px"><div class="c" style="left:0px;width:50px"></div><div class="c" style="left:50px;width:485px"></div><div class="c" style="left:535px;width:179px"></div><div class="c" style="left:714px;width:162px"></div><div class="c" style="left:876px;width:163px"></div><div class="c" style="left:1039px;width:165px"></div><div class="c" style="left:1204px;width:155px"></div><div class="c" style="left:1359px;width:118px;border-right:none"></div>
<div class="num">10</div>
<div class="tx" style="left:111.5px">External Communication</div>
<div class="sq" style="left:547px;background:#fde43a"></div>
<div class="tx" style="left:576px">In Progress</div>
<div class="tx dt red" style="right:611px">03/04/2024</div>
<div class="tx dt" style="right:448px">22/03/2024</div>
<div class="tx" style="left:1049.5px">1. Initiation, Ste...</div>
<div class="tx" style="left:1214.5px">Julia Hernand...</div>
<div class="tx dt" style="right:7px">1d</div>
</div>
<div class="row" style="top:636.6px"><div class="c" style="left:0px;width:50px"></div><div class="c" style="left:50px;width:485px"></div><div class="c" style="left:535px;width:179px"></div><div class="c" style="left:714px;width:162px"></div><div class="c" style="left:876px;width:163px"></div><div class="c" style="left:1039px;width:165px"></div><div class="c" style="left:1204px;width:155px"></div><div class="c" style="left:1359px;width:118px;border-right:none"></div>
<div class="num">11</div>
<div class="tx" style="left:111.5px">External Communication</div>
<div class="sq" style="left:547px;background:#fde43a"></div>
<div class="tx" style="left:576px">In Progress</div>
<div class="tx dt" style="right:611px">17/07/2024</div>
<div class="tx dt" style="right:448px">24/06/2024</div>
<div class="tx" style="left:1049.5px">Step 1: Quick S...</div>
<div class="tx" style="left:1214.5px">Julia Hernand...</div>
<div class="tx dt" style="right:7px">1d</div>
</div>
<div class="row" style="top:676.99px"><div class="c" style="left:0px;width:50px"></div><div class="c" style="left:50px;width:485px"></div><div class="c" style="left:535px;width:179px"></div><div class="c" style="left:714px;width:162px"></div><div class="c" style="left:876px;width:163px"></div><div class="c" style="left:1039px;width:165px"></div><div class="c" style="left:1204px;width:155px"></div><div class="c" style="left:1359px;width:118px;border-right:none"></div>
<div class="num">12</div>
<div class="tx" style="left:111.5px">Content Development</div>
<div class="sq" style="left:547px;background:#fde43a"></div>
<div class="tx" style="left:576px">In Progress</div>
<div class="tx dt" style="right:448px">22/03/2024</div>
<div class="tx" style="left:1049.5px">Knowledge Bas...</div>
<div class="tx dt" style="right:7px">2d</div>
</div>
<div class="row" style="top:717.38px"><div class="c" style="left:0px;width:50px"></div><div class="c" style="left:50px;width:485px"></div><div class="c" style="left:535px;width:179px"></div><div class="c" style="left:714px;width:162px"></div><div class="c" style="left:876px;width:163px"></div><div class="c" style="left:1039px;width:165px"></div><div class="c" style="left:1204px;width:155px"></div><div class="c" style="left:1359px;width:118px;border-right:none"></div>
<div class="num">13</div>
<div class="tx" style="left:111.5px">Communication</div>
<div class="sq" style="left:547px;background:#fde43a"></div>
<div class="tx" style="left:576px">In Progress</div>
<div class="tx dt" style="right:611px">22/08/2024</div>
<div class="tx dt" style="right:448px">24/06/2024</div>
<svg class="ic" style="left:1052px;top:9.5px" width="20" height="21" viewBox="0 0 22 22"><g fill="#fbd03c"><path d="M12.5 1.8 Q13.4 10.2 19.6 11.2 Q13.4 12.2 12.5 20.6 Q11.6 12.2 5.4 11.2 Q11.6 10.2 12.5 1.8 Z"/><path d="M2.4 1.5 Q2.8 5.4 5.3 5.9 Q2.8 6.4 2.4 10.3 Q2 6.4 -0.5 5.9 Q2 5.4 2.4 1.5 Z"/><path d="M5.7 13.9 Q6.05 17.3 8.3 17.8 Q6.05 18.3 5.7 21.7 Q5.35 18.3 3.1 17.8 Q5.35 17.3 5.7 13.9 Z"/></g></svg>
<div class="tx" style="left:1079.5px">Detailed ins...</div>
<div class="tx" style="left:1214.5px">David Martin</div>
<div class="tx dt" style="right:7px">1d</div>
</div>
<div class="row" style="top:757.77px"><div class="c" style="left:0px;width:50px"></div><div class="c" style="left:50px;width:485px"></div><div class="c" style="left:535px;width:179px"></div><div class="c" style="left:714px;width:162px"></div><div class="c" style="left:876px;width:163px"></div><div class="c" style="left:1039px;width:165px"></div><div class="c" style="left:1204px;width:155px"></div><div class="c" style="left:1359px;width:118px;border-right:none"></div>
<div class="num">14</div>
<div class="tx" style="left:111.5px">Communication</div>
<div class="sq" style="left:547px;background:#fde43a"></div>
<div class="tx" style="left:576px">In Progress</div>
<div class="tx dt red" style="right:611px">09/05/2024</div>
<div class="tx dt" style="right:448px">18/04/2024</div>
<svg class="ic" style="left:1052px;top:9.5px" width="20" height="21" viewBox="0 0 22 22"><g fill="#fbd03c"><path d="M12.5 1.8 Q13.4 10.2 19.6 11.2 Q13.4 12.2 12.5 20.6 Q11.6 12.2 5.4 11.2 Q11.6 10.2 12.5 1.8 Z"/><path d="M2.4 1.5 Q2.8 5.4 5.3 5.9 Q2.8 6.4 2.4 10.3 Q2 6.4 -0.5 5.9 Q2 5.4 2.4 1.5 Z"/><path d="M5.7 13.9 Q6.05 17.3 8.3 17.8 Q6.05 18.3 5.7 21.7 Q5.35 18.3 3.1 17.8 Q5.35 17.3 5.7 13.9 Z"/></g></svg>
<div class="tx" style="left:1079.5px">Detailed ins...</div>
<div class="tx" style="left:1214.5px">David Martin</div>
<div class="tx dt" style="right:7px">1d</div>
</div>
<div class="row" style="top:798.16px"><div class="c" style="left:0px;width:50px"></div><div class="c" style="left:50px;width:485px"></div><div class="c" style="left:535px;width:179px"></div><div class="c" style="left:714px;width:162px"></div><div class="c" style="left:876px;width:163px"></div><div class="c" style="left:1039px;width:165px"></div><div class="c" style="left:1204px;width:155px"></div><div class="c" style="left:1359px;width:118px;border-right:none"></div>
<div class="num">15</div>
<div class="tx" style="left:111.5px">06. GA Launch</div>
<div class="sq" style="left:547px;background:#fde43a"></div>
<div class="tx" style="left:576px">In Progress</div>
<div class="tx dt red" style="right:611px">08/02/2024</div>
<div class="tx dt" style="right:448px">08/02/2024</div>
<div class="tx" style="left:1049.5px">Perform Custo...</div>
<div class="tx" style="left:1214.5px">Lisa Simpson</div>
</div>
<div class="row" style="top:838.55px"><div class="c" style="left:0px;width:50px"></div><div class="c" style="left:50px;width:485px"></div><div class="c" style="left:535px;width:179px"></div><div class="c" style="left:714px;width:162px"></div><div class="c" style="left:876px;width:163px"></div><div class="c" style="left:1039px;width:165px"></div><div class="c" style="left:1204px;width:155px"></div><div class="c" style="left:1359px;width:118px;border-right:none"></div>
<div class="num">16</div>
<div class="tx" style="left:111.5px">TEST 2</div>
<div class="sq" style="left:547px;background:#00bcd4"></div>
<div class="tx" style="left:576px">New</div>
<div class="tx dt red" style="right:611px">23/05/2024</div>
<div class="tx dt" style="right:448px">06/05/2024</div>
<div class="tx" style="left:1049.5px">Website Launch</div>
<div class="tx dt" style="right:7px">5d</div>
</div>
<div class="row" style="top:878.94px"><div class="c" style="left:0px;width:50px"></div><div class="c" style="left:50px;width:485px"></div><div class="c" style="left:535px;width:179px"></div><div class="c" style="left:714px;width:162px"></div><div class="c" style="left:876px;width:163px"></div><div class="c" style="left:1039px;width:165px"></div><div class="c" style="left:1204px;width:155px"></div><div class="c" style="left:1359px;width:118px;border-right:none"></div>
<div class="num">17</div>
<div class="tx" style="left:111.5px">TEST 1</div>
<div class="sq" style="left:547px;background:#00bcd4"></div>
<div class="tx" style="left:576px">New</div>
<div class="tx dt red" style="right:611px">17/05/2024</div>
<div class="tx dt" style="right:448px">06/05/2024</div>
<div class="tx" style="left:1049.5px">Website Launch</div>
<div class="tx dt" style="right:7px">13d</div>
</div>
<div class="row" style="top:919.33px"><div class="c" style="left:0px;width:50px"></div><div class="c" style="left:50px;width:485px"></div><div class="c" style="left:535px;width:179px"></div><div class="c" style="left:714px;width:162px"></div><div class="c" style="left:876px;width:163px"></div><div class="c" style="left:1039px;width:165px"></div><div class="c" style="left:1204px;width:155px"></div><div class="c" style="left:1359px;width:118px;border-right:none"></div>
<div class="num">18</div>
<div class="tx" style="left:111.5px">External Communication</div>
<div class="sq" style="left:547px;background:#00bcd4"></div>
<div class="tx" style="left:576px">New</div>
<div class="tx dt red" style="right:611px">08/04/2024</div>
<div class="tx dt" style="right:448px">22/03/2024</div>
<div class="tx" style="left:1049.5px">Website Launch...</div>
<div class="tx dt" style="right:7px">1d</div>
</div>
<div class="row" style="top:959.72px"><div class="c" style="left:0px;width:50px"></div><div class="c" style="left:50px;width:485px"></div><div class="c" style="left:535px;width:179px"></div><div class="c" style="left:714px;width:162px"></div><div class="c" style="left:876px;width:163px"></div><div class="c" style="left:1039px;width:165px"></div><div class="c" style="left:1204px;width:155px"></div><div class="c" style="left:1359px;width:118px;border-right:none"></div>
<div class="num">19</div>
<div class="tx" style="left:111.5px">03. External Research</div>
<div class="sq" style="left:547px;background:#00bcd4"></div>
<div class="tx" style="left:576px">New</div>
<div class="tx dt" style="right:448px">24/06/2024</div>
<svg class="ic" style="left:1052px;top:9.5px" width="20" height="21" viewBox="0 0 22 22"><g fill="#fbd03c"><path d="M12.5 1.8 Q13.4 10.2 19.6 11.2 Q13.4 12.2 12.5 20.6 Q11.6 12.2 5.4 11.2 Q11.6 10.2 12.5 1.8 Z"/><path d="M2.4 1.5 Q2.8 5.4 5.3 5.9 Q2.8 6.4 2.4 10.3 Q2 6.4 -0.5 5.9 Q2 5.4 2.4 1.5 Z"/><path d="M5.7 13.9 Q6.05 17.3 8.3 17.8 Q6.05 18.3 5.7 21.7 Q5.35 18.3 3.1 17.8 Q5.35 17.3 5.7 13.9 Z"/></g></svg>
<div class="tx" style="left:1079.5px">Detailed ins...</div>
<div class="tx" style="left:1214.5px">David Martin</div>
<div class="tx dt" style="right:7px">5d</div>
</div>
<div class="row" style="top:982px;height:40px;border-top:1px solid #e3e7ef;border-bottom:none;background:linear-gradient(#ffffff,#fbfbfc 40%,#ececef)"><div class="c" style="left:0px;width:50px"></div><div class="c" style="left:50px;width:485px"></div><div class="c" style="left:535px;width:179px"></div><div class="c" style="left:714px;width:162px"></div><div class="c" style="left:876px;width:163px"></div><div class="c" style="left:1039px;width:165px"></div><div class="c" style="left:1204px;width:155px"></div><div class="c" style="left:1359px;width:118px;border-right:none"></div>
<div class="tx" style="left:61.5px;top:10.5px">Total: 607 tasks</div>
<div class="tx" style="left:725px;top:12px;font-size:12.3px;letter-spacing:1.2px;color:#23273a;-webkit-text-stroke:0.45px #23273a">MAX</div>
<div class="tx dt" style="right:611px;top:10.5px">14/10/2024</div>
<div class="tx" style="left:1369px;top:12px;font-size:12.3px;letter-spacing:1.2px;color:#23273a;-webkit-text-stroke:0.45px #23273a">SUM</div>
<div class="tx dt" style="right:7px;top:10.5px">2721d</div>
</div>
<div class="abs" style="left:1234.5px;top:90.5px;width:187px;height:275px;border-radius:13px;background:#fff;box-shadow:0 4px 18px rgba(30,40,80,0.16),0 0 2px rgba(30,40,80,0.08)"></div>
<div class="t" style="left:1265.5px;top:110.5px;font-size:14.2px;font-weight:bold;letter-spacing:0.35px;color:#4b5a7c">Snapshots</div>
<div class="t" style="left:1266.5px;top:152.54px;font-size:17.5px;letter-spacing:0.3px;color:#1d2136">Create</div>
<div class="t" style="left:1266.5px;top:195.54px;font-size:17.5px;letter-spacing:0.3px;color:#1d2136">Send by email</div>
<div class="t" style="left:1266.5px;top:238.04px;font-size:17.5px;letter-spacing:0.3px;color:#1d2136">View all</div>
<div class="t" style="left:1266.5px;top:281.04px;font-size:17.5px;letter-spacing:0.3px;color:#1d2136">Duplicate</div>
<div class="t" style="left:1266.5px;top:323.94px;font-size:17.5px;letter-spacing:0.3px;color:#1d2136">Delete</div>
<svg class="ic" style="left:1197px;top:84px" width="60" height="45" viewBox="1520 84 60 45"><path fill-rule="evenodd" fill="#08cc62" d="M1530.2 85.9 H1566.8 Q1574.8 85.9 1574.8 93.9 V117.7 Q1574.8 125.7 1566.8 125.7 H1530.2 Q1522.2 125.7 1522.2 117.7 V93.9 Q1522.2 85.9 1530.2 85.9 Z M1535 91.9 H1562 Q1568.8 91.9 1568.8 98.7 V112.9 Q1568.8 119.7 1562 119.7 H1535 Q1528.2 119.7 1528.2 112.9 V98.7 Q1528.2 91.9 1535 91.9 Z"/></svg>
<svg class="ic" style="left:1215px;top:102px" width="20" height="8" viewBox="0 0 20 8"><circle cx="3.4" cy="4.3" r="1.85" fill="#1d4fc4"/><circle cx="9.8" cy="4.3" r="1.85" fill="#1d4fc4"/><circle cx="16.2" cy="4.3" r="1.85" fill="#1d4fc4"/></svg>
<svg class="ic" style="left:1251px;top:308px" width="110" height="52" viewBox="1574 308 110 52"><path fill-rule="evenodd" fill="#08cc62" d="M1583.9 310 H1671.5 Q1679.5 310 1679.5 318 V349 Q1679.5 357 1671.5 357 H1583.9 Q1575.9 357 1575.9 349 V318 Q1575.9 310 1583.9 310 Z M1588.9 316 H1666.5 Q1673.5 316 1673.5 323 V344 Q1673.5 351 1666.5 351 H1588.9 Q1581.9 351 1581.9 344 V323 Q1581.9 316 1588.9 316 Z"/></svg>
<div class="abs" style="left:1144.0px;top:37.0px;width:67px;height:67px;border-radius:50%;background:rgba(8,204,98,0.18)"></div>
<div class="abs" style="left:1154.0px;top:47.0px;width:47px;height:47px;border-radius:50%;background:#08cc62"></div>
<svg class="ic" style="left:1157px;top:50px" width="40" height="40" viewBox="1480 50 40 40"><path d="M1500.2 61.1 L1503.4 61.1 L1503.4 79.9 L1499.9 79.9 L1499.9 65.8 L1496.2 65.8 L1496.2 63.4 Q1499 63 1500.2 61.1 Z" fill="#fff"/></svg>
<div class="abs" style="left:1194.0px;top:300.2px;width:67px;height:67px;border-radius:50%;background:rgba(8,204,98,0.18)"></div>
<div class="abs" style="left:1204.0px;top:310.2px;width:47px;height:47px;border-radius:50%;background:#08cc62"></div>
<svg class="ic" style="left:1207px;top:315px" width="40" height="40" viewBox="1530 315 40 40"><path d="M1545.4 328 Q1546.2 324.05 1550.5 324.05 Q1555.3 324.05 1555.3 328.5 Q1555.3 331.2 1552.3 333.3 L1547.4 336.8 Q1545.6 338.2 1545.6 340.35 L1557.2 340.35" fill="none" stroke="#fff" stroke-width="3.3"/></svg>
</div>
<svg class="ic" style="left:0;top:0" width="1802" height="1023" viewBox="0 0 1802 1023"><path fill-rule="evenodd" fill="#18181a" d="M0 0 H1802 V1023 H0 Z M1 1 H1800 V1017.5 Q1800 1021.6 1796 1021.6 H9 Q1 1021.6 1 1013.6 Z"/></svg>
</div></body></html>
